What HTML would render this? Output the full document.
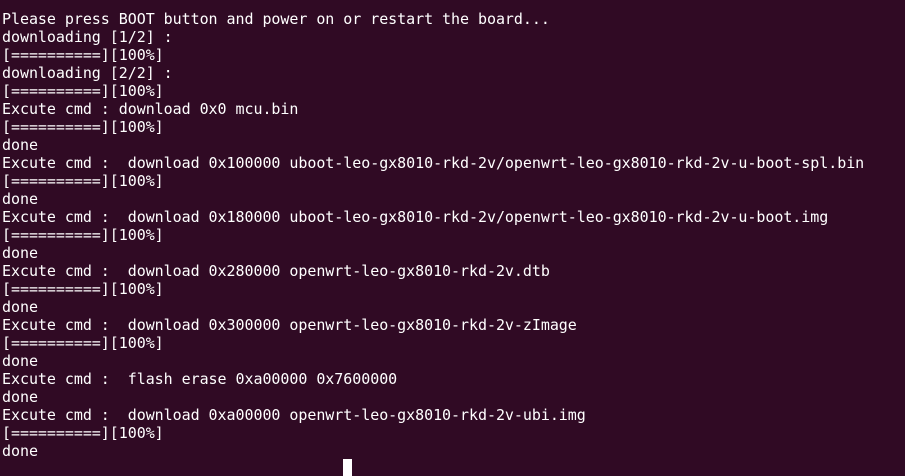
<!DOCTYPE html>
<html><head><style>
html,body{margin:0;padding:0;width:905px;height:463px;overflow:hidden;background:#300a24;}
pre{margin:0;position:absolute;left:2px;top:10px;font-family:"DejaVu Sans Mono","Liberation Mono",monospace;font-size:15px;line-height:18px;letter-spacing:-0.05px;color:#ffffff;white-space:pre;}
.cur{position:absolute;left:343px;top:459px;width:9px;height:17px;background:#fff;}
</style></head><body>
<pre>Please press BOOT button and power on or restart the board...
downloading [1/2] :
[==========][100%]
downloading [2/2] :
[==========][100%]
Excute cmd : download 0x0 mcu.bin
[==========][100%]
done
Excute cmd :  download 0x100000 uboot-leo-gx8010-rkd-2v/openwrt-leo-gx8010-rkd-2v-u-boot-spl.bin
[==========][100%]
done
Excute cmd :  download 0x180000 uboot-leo-gx8010-rkd-2v/openwrt-leo-gx8010-rkd-2v-u-boot.img
[==========][100%]
done
Excute cmd :  download 0x280000 openwrt-leo-gx8010-rkd-2v.dtb
[==========][100%]
done
Excute cmd :  download 0x300000 openwrt-leo-gx8010-rkd-2v-zImage
[==========][100%]
done
Excute cmd :  flash erase 0xa00000 0x7600000
done
Excute cmd :  download 0xa00000 openwrt-leo-gx8010-rkd-2v-ubi.img
[==========][100%]
done
</pre>
<div class="cur"></div>
</body></html>
